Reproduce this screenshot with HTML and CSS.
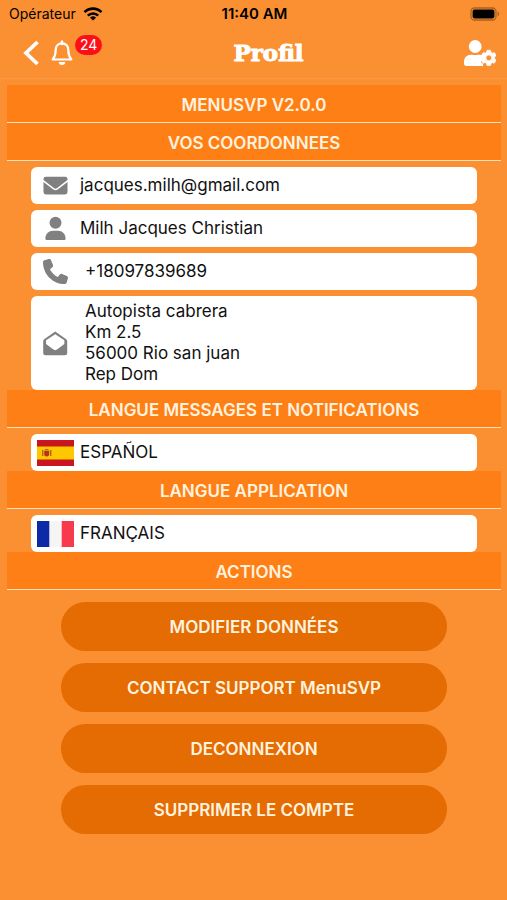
FILE: index.html
```html
<!DOCTYPE html>
<html lang="fr">
<head>
    <meta charset="UTF-8">
    <meta name="viewport" content="width=device-width, initial-scale=1.0">
    <title>Profil</title>
    <link rel="stylesheet" href="styles.css">
</head>
<body>
    <div class="status-bar">
        <div class="carrier">
            <span>Opérateur</span>
            <svg width="20" height="14" viewBox="0 0 20 14" aria-hidden="true">
                <g fill="none" stroke="#000" stroke-width="2.6">
                    <path d="M1.5 5.2a12 12 0 0 1 17 0"/>
                    <path d="M4.8 8.6a7.4 7.4 0 0 1 10.4 0"/>
                </g>
                <path d="M10 13.6 7 10.7a4.3 4.3 0 0 1 6 0z"/>
            </svg>
        </div>
        <time class="clock">11:40 AM</time>
        <svg class="battery" width="30" height="14" viewBox="0 0 30 14" aria-hidden="true">
            <rect x="1" y="1" width="25" height="12" rx="3.5" fill="none" stroke="#a8611f" stroke-width="1.3"/>
            <rect x="2.6" y="2.6" width="21.8" height="8.8" rx="1.8"/>
            <path d="M27.6 4.6c2 .8 2 4 0 4.8z" fill="#a8611f"/>
        </svg>
    </div>

    <header class="nav-bar">
        <div class="nav-left">
            <button class="icon-btn" aria-label="Retour">
                <svg width="18" height="28" viewBox="0 0 18 28"><path d="M15.500 3 4 14l11.500 11" fill="none" stroke="#fff" stroke-width="3.8"/></svg>
            </button>
            <button class="icon-btn bell" aria-label="Notifications">
                <svg width="22" height="26" viewBox="0 0 22 26">
                    <path d="M11 3.4c-4 0-6.3 3-6.3 6.6 0 5.2-1.2 7.2-3 9.500h18.600c-1.800-2.300-3-4.300-3-9.500 0-3.600-2.300-6.600-6.300-6.600z" fill="none" stroke="#fff" stroke-width="2.2" stroke-linejoin="round"/>
                    <path d="M11 1.500v2.500" stroke="#fff" stroke-width="2.4" stroke-linecap="round"/>
                    <path d="M7.8 22h6.400a3.200 3 0 0 1-6.400 0z" fill="#fff"/>
                </svg>
                <span class="badge">24</span>
            </button>
        </div>
        <h1>Profil</h1>
        <button class="icon-btn" aria-label="Paramètres du compte">
            <svg width="32" height="26" viewBox="0 0 640 512" preserveAspectRatio="none" fill="#fff">
                <path d="M224 256a128 128 0 1 0 0-256 128 128 0 0 0 0 256zM314 289c-9-1-18-1-24-1h-11a174 174 0 0 1-110 0h-35C60 288 0 348 0 422v42c0 27 21 48 48 48h340c-6-10-9-20-8-29v-14l-17-10c-24-14-20-32-12-51l28-49 16-20c-20-24-50-48-81-50z"/>
                <path stroke="#fff" stroke-width="16" fill-rule="evenodd" d="m610 373c3-14 3-28 0-42l26-15c3-2 4-5 3-9-7-22-18-42-33-58-3-3-6-4-9-2l-26 15c-11-9-23-16-36-21v-29c0-4-3-7-6-8-22-5-45-5-67 0-3 1-6 4-6 8v29c-13 5-25 12-36 21l-26-15c-3-2-7-1-9 2-15 16-26 36-33 58-1 4 0 7 3 9l26 15c-3 14-3 28 0 42l-26 15c-3 2-4 5-3 9 7 22 18 42 33 58 2 3 6 4 9 2l26-15c11 9 23 16 36 21v29c0 4 3 7 6 8 22 5 45 5 67 0 3-1 6-4 6-8v-29c13-5 25-12 36-21l26 15c3 2 7 1 9-2 15-16 26-36 33-58 1-4 0-7-3-9zM496 411a59 59 0 1 1 0-118 59 59 0 0 1 0 118z"/>
            </svg>
        </button>
    </header>

    <main>
        <h2>MENUSVP V2.0.0</h2>
        <h2>VOS COORDONNEES</h2>
        <ul class="details">
            <li class="card">
                <svg class="icon" viewBox="0 0 26 26" aria-hidden="true">
                    <path d="M3 4h20a2.5 2.5 0 0 1 2.5 2.500v.9L14.700 15.700a2.800 2.800 0 0 1-3.400 0L.5 7.400v-.9A2.500 2.500 0 0 1 3 4z"/>
                    <path d="M.5 9.300 10.400 17a4.200 4.200 0 0 0 5.200 0l9.900-7.700v10.500a2.500 2.500 0 0 1-2.500 2.500H3A2.500 2.500 0 0 1 .5 19.800z"/>
                </svg>
                <span>jacques.milh@gmail.com</span>
            </li>
            <li class="card">
                <svg class="icon" viewBox="0 0 26 26" aria-hidden="true">
                    <circle cx="13" cy="7" r="6.2"/>
                    <path d="M10.5 15.300h5c4.600 0 8 3.500 8 8 0 1.100-.6 1.700-1.700 1.700H4.200c-1.100 0-1.700-.6-1.700-1.700 0-4.500 3.400-8 8-8z"/>
                </svg>
                <span>Milh Jacques Christian</span>
            </li>
            <li class="card">
                <svg class="icon" viewBox="0 0 512 512" aria-hidden="true">
                    <path d="M165 25c-8-19-28-29-48-23L29 26C12 31 0 46 0 64c0 247 201 448 448 448 18 0 33-12 38-29l24-88c6-20-4-40-23-48l-96-40c-16-7-36-2-47 12l-40 49c-71-33-127-90-161-160l49-40c14-11 19-30 12-47z"/>
                </svg>
                <span class="indent">+18097839689</span>
            </li>
            <li class="card">
                <svg class="icon" viewBox="0 0 26 26" aria-hidden="true">
                    <path fill-rule="evenodd" d="M12.7.5 23.800 8.200c.9.7 1.400 1.400 1.400 2.600v12a2.400 2.400 0 0 1-2.400 2.400H2.600A2.400 2.400 0 0 1 .2 22.800v-12c0-1.200.5-1.900 1.400-2.600zM12.700 3.300 3.200 9.700v3.800l6.900 5.300c1.900 1.500 3.300 1.500 5.200 0l6.900-5.300V9.700z"/>
                </svg>
                <address class="indent">Autopista cabrera<br>Km 2.5<br>56000 Rio san juan<br>Rep Dom</address>
            </li>
        </ul>

        <h2>LANGUE MESSAGES ET NOTIFICATIONS</h2>
        <button class="card language">
            <svg class="flag" viewBox="0 0 37 26" aria-hidden="true">
                <path fill="#c9151f" d="M0 0h37v26H0z"/>
                <path fill="#fdc800" d="M0 6.500h37v13H0z"/>
                <g fill="#b5651d">
                    <path d="M5 10h1.400v6H5zM13 10h1.400v6H13z"/>
                    <path d="M7.200 11h5v3.500a2.500 2 0 0 1-5 0z" fill="#b8321e"/>
                    <path d="M7.300 10.400c0-2 4.800-2 4.800 0z"/>
                </g>
            </svg>
            <span>ESPAÑOL</span>
        </button>

        <h2>LANGUE APPLICATION</h2>
        <button class="card language">
            <svg class="flag" viewBox="0 0 37 26" aria-hidden="true">
                <path fill="#f5f5f5" d="M0 0h37v26H0z"/>
                <path fill="#0a2aa8" d="M0 0h12.300v26H0z"/>
                <path fill="#f73b4c" d="M24.700 0H37v26H24.700z"/>
            </svg>
            <span>FRANÇAIS</span>
        </button>

        <h2>ACTIONS</h2>
        <div class="actions">
            <button>MODIFIER DONNÉES</button>
            <button>CONTACT SUPPORT MenuSVP</button>
            <button>DECONNEXION</button>
            <button>SUPPRIMER LE COMPTE</button>
        </div>
    </main>
</body>
</html>
```

FILE: styles.css
```css
* {
    box-sizing: border-box;
}

body {
    margin: 0;
    min-height: 100vh;
    background-color: #fb9033;
    color: #111;
    font-family: Inter, "Liberation Sans", sans-serif;
    font-size: 17px;
}

button {
    border: none;
    font: inherit;
    color: inherit;
    cursor: pointer;
}

/* Status bar */
.status-bar {
    display: grid;
    grid-template-columns: 1fr auto 1fr;
    align-items: center;
    height: 27px;
    padding: 0 7px 0 9px;
    color: #000;
    font-size: 14px;
}

.carrier {
    display: flex;
    align-items: center;
    gap: 7px;
}

.clock {
    font-size: 15px;
    font-weight: 600;
}

.battery {
    justify-self: end;
}

/* Navigation */
.nav-bar {
    display: flex;
    align-items: center;
    justify-content: space-between;
    height: 51px;
    padding: 0 11px 0 22px;
}

.nav-left {
    display: flex;
    align-items: center;
    gap: 11px;
}

.icon-btn {
    display: flex;
    padding: 0;
    background: none;
}

.bell {
    position: relative;
}

.badge {
    position: absolute;
    top: -5px;
    left: 24px;
    padding: 0 5px;
    border-radius: 10px;
    background-color: #fb1018;
    color: #fff;
    font-size: 14px;
    line-height: 20px;
}

h1 {
    margin: 0;
    color: #fff;
    font-family: "DejaVu Serif", serif;
    font-size: 23px;
    font-weight: bold;
    -webkit-text-stroke: 1px #fff;
}

main {
    padding: 6px 6px 24px 7px;
    border-top: 1px solid #fb9841;
}

h2 {
    height: 38px;
    margin: 0;
    padding-top: 3px;
    border-bottom: 1px solid #ffe0bd;
    background-color: #ff7f17;
    color: #fff3df;
    font-size: 17px;
    font-weight: 600;
    line-height: 34px;
    text-align: center;
}

/* Cards */
.details {
    display: flex;
    flex-direction: column;
    gap: 6px;
    margin: 6px 24px 0;
    padding: 0;
    list-style: none;
}

.card {
    display: flex;
    align-items: center;
    gap: 12px;
    min-height: 37px;
    padding: 5px 12px;
    border-radius: 6px;
    background-color: #fff;
    line-height: 21px;
}

.icon {
    flex: none;
    width: 25px;
    height: 25px;
    fill: #808080;
}

.indent {
    padding-left: 5px;
    font-style: normal;
}

.language {
    width: calc(100% - 48px);
    margin: 6px 24px 0;
    padding: 5px 6px;
    gap: 6px;
}

.flag {
    width: 37px;
    height: 26px;
}

/* Actions */
.actions {
    display: flex;
    flex-direction: column;
    gap: 12px;
    margin: 12px 54px 0;
}

.actions button {
    height: 49px;
    border-radius: 25px;
    background-color: #e56b03;
    color: #fff3df;
    font-weight: 600;
}
```
